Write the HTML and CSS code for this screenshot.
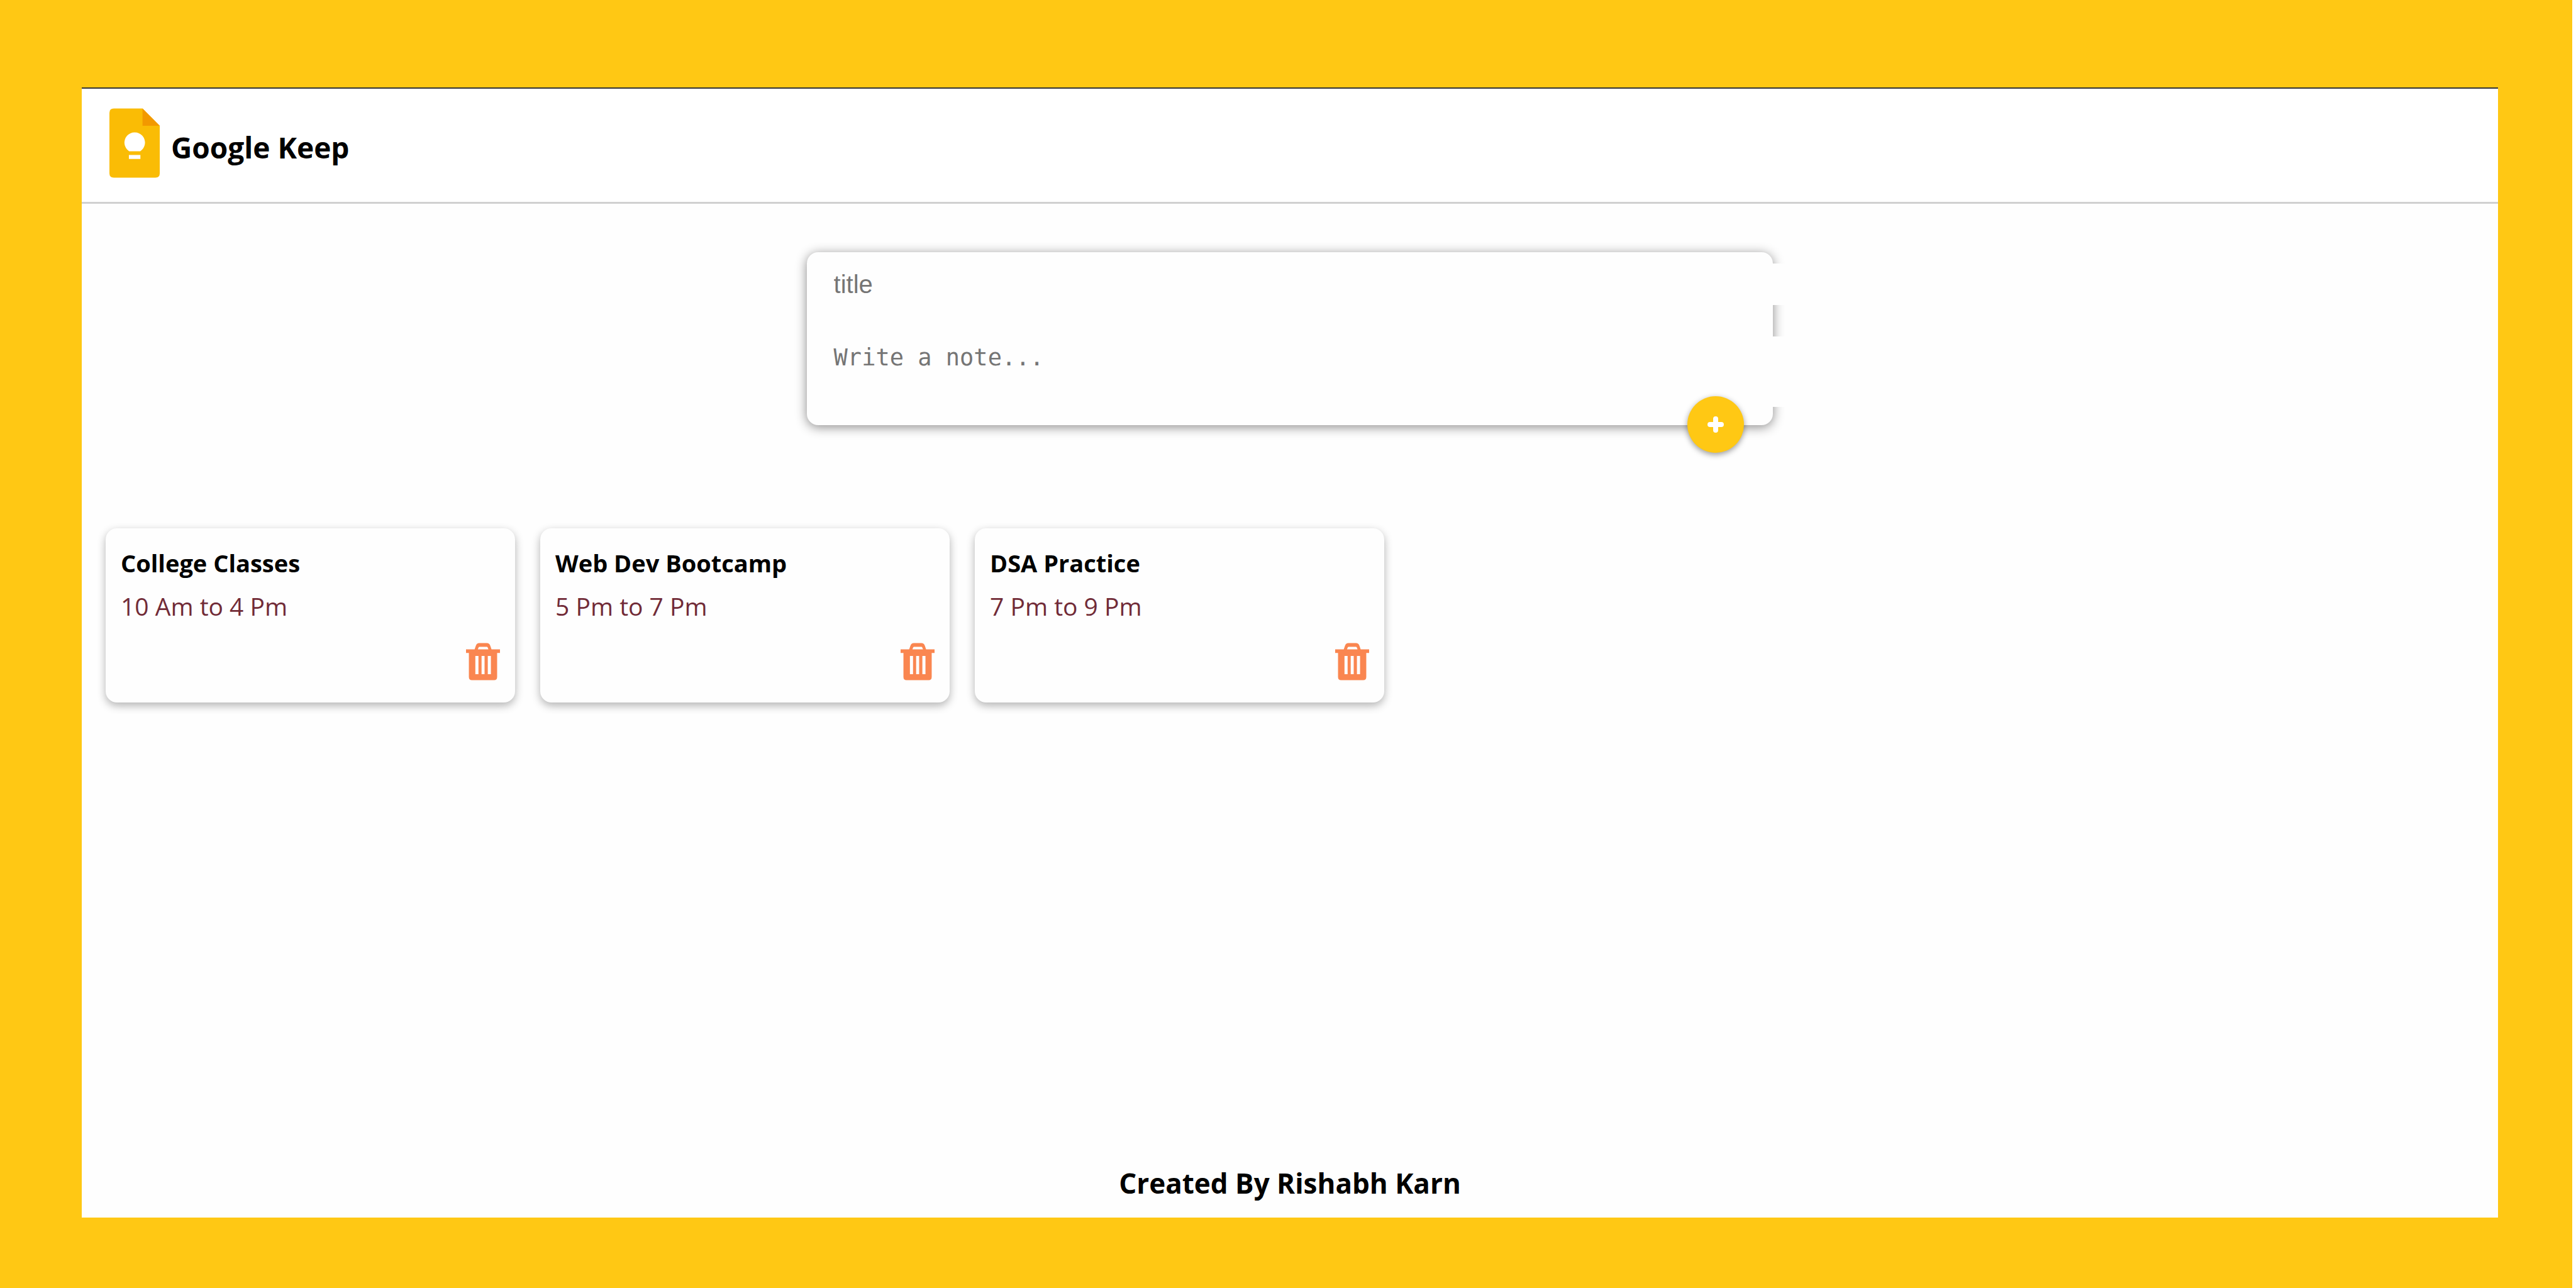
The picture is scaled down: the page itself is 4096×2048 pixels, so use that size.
FILE: index.html
```html
<!DOCTYPE html>
<html lang="en">
<head>
  <meta charset="utf-8">
  <meta name="viewport" content="width=device-width, initial-scale=1">
  <title>Google Keep</title>
  <link rel="stylesheet" href="styles.css">
</head>
<body>
  <svg class="sprite" aria-hidden="true">
    <symbol id="trash" viewBox="85 75 273 302">
      <path fill-rule="evenodd" d="M85 127H154L164 98Q172 77 192 77H252Q272 77 280 98L290 127H358V157H335V350Q335 375 310 375H133Q108 375 108 350V157H85ZM180 127H265L259 112Q257 107 252 107H193Q188 107 186 112ZM160 180V327H185V180ZM210 180V327H234V180ZM260 180V327H285V180Z"/>
    </symbol>
  </svg>

  <div class="frame">
    <div class="app">
      <header class="header">
        <svg class="logo" viewBox="38 30 406 558" aria-hidden="true">
          <path fill="#fabc05" d="M73 30H305L444 170V553Q444 588 409 588H73Q38 588 38 553V65Q38 30 73 30Z"/>
          <path fill="#f29900" d="M305 30L444 170H305Z"/>
          <path fill="#fff" d="M197 375A83 83 0 1 1 287 375Z"/>
          <rect fill="#fff" x="195" y="405" width="93" height="32"/>
        </svg>
        <h1 class="brand">Google Keep</h1>
      </header>

      <main>
        <form class="composer">
          <input class="field field-title" type="text" placeholder="title" aria-label="Title">
          <textarea class="field field-note" placeholder="Write a note..." aria-label="Note"></textarea>
          <button class="add" type="button" aria-label="Add note">
            <svg class="add-icon" viewBox="0 0 28 28" aria-hidden="true">
              <path fill="none" stroke="currentColor" stroke-width="8" stroke-linecap="round" d="M14 5V23M5 14H23"/>
            </svg>
          </button>
        </form>

        <section class="notes" aria-label="Notes">
          <article class="note">
            <h2 class="note-title">College Classes</h2>
            <p class="note-text">10 Am to 4 Pm</p>
            <button class="delete" type="button" aria-label="Delete College Classes"><svg class="delete-icon"><use href="#trash"/></svg></button>
          </article>
          <article class="note">
            <h2 class="note-title">Web Dev Bootcamp</h2>
            <p class="note-text">5 Pm to 7 Pm</p>
            <button class="delete" type="button" aria-label="Delete Web Dev Bootcamp"><svg class="delete-icon"><use href="#trash"/></svg></button>
          </article>
          <article class="note">
            <h2 class="note-title">DSA Practice</h2>
            <p class="note-text">7 Pm to 9 Pm</p>
            <button class="delete" type="button" aria-label="Delete DSA Practice"><svg class="delete-icon"><use href="#trash"/></svg></button>
          </article>
        </section>
      </main>

      <footer class="footer">Created By Rishabh Karn</footer>
    </div>
  </div>
</body>
</html>
```
FILE: styles.css
```css
* {
  box-sizing: border-box;
}

body {
  margin: 0;
  background: #fff;
  color: #000;
  font-family: "Open Sans", "Noto Sans", sans-serif;
}

h1,
h2,
p {
  margin: 0;
}

button {
  padding: 0;
  border: 0;
  background: none;
  cursor: pointer;
}

svg {
  display: block;
}

.sprite {
  display: none;
}

.frame {
  display: flex;
  min-height: 100vh;
  margin-right: 6px;
  padding: 139px 118px 112px 130px;
  background: #ffc814;
}

.app {
  display: flex;
  flex: 1;
  flex-direction: column;
  min-width: 0;
  background: #fefefe;
}

.header {
  display: flex;
  align-items: center;
  gap: 18px;
  padding: 31px 44px 38px;
  border-top: 2px solid #333;
  border-bottom: 3px solid #d0d0d0;
  background: #fff;
}

.logo {
  width: 80px;
  height: 111px;
}

.brand {
  padding-top: 12px;
  font-size: 46px;
  font-weight: 700;
  line-height: 62px;
}

.composer {
  position: relative;
  display: flex;
  flex-direction: column;
  gap: 50px;
  width: 40%;
  margin: 77px auto 164px;
  padding: 18px 18px 29px;
  border-radius: 18px;
  background: #fefefe;
  box-shadow: 0 3px 18px #8a8989;
}

/* The fields keep their padding outside the full width and cover the right edge. */
.field {
  box-sizing: content-box;
  width: 100%;
  padding: 0 25px;
  border: 0;
  outline: none;
  background: #fefefe;
  resize: none;
}

.field::placeholder {
  color: #757575;
  opacity: 1;
}

.field-title {
  height: 66px;
  font-family: "Liberation Sans", sans-serif;
  font-size: 40px;
}

.field-note {
  height: 100px;
  padding-top: 12px;
  overflow: hidden;
  font-family: "DejaVu Sans Mono", monospace;
  font-size: 37px;
}

.add {
  position: absolute;
  right: 46px;
  bottom: -44px;
  display: grid;
  place-items: center;
  width: 90px;
  height: 90px;
  border-radius: 50%;
  background: #ffc814;
  color: #fff;
  box-shadow: 0 3px 10px rgba(0, 0, 0, 0.4);
}

.add-icon {
  width: 28px;
  height: 28px;
}

.notes {
  display: flex;
  flex-wrap: wrap;
  gap: 40px;
  padding: 0 38px 40px;
}

.note {
  width: 651px;
  padding: 29px 24px 35px;
  border-radius: 18px;
  background: #fefefe;
  box-shadow: 0 5px 14px #b2b2b2;
}

.note-title {
  margin-bottom: 17px;
  font-size: 38px;
  font-weight: 700;
  line-height: 52px;
}

.note-text {
  margin-bottom: 32px;
  color: #712b37;
  font-size: 39px;
  line-height: 52px;
}

.delete {
  display: block;
  margin-left: auto;
  color: #fa8650;
}

.delete-icon {
  width: 54px;
  height: 60px;
  fill: currentColor;
}

.footer {
  margin-top: auto;
  padding-bottom: 25px;
  font-size: 44px;
  font-weight: 700;
  line-height: 60px;
  text-align: center;
}
```
